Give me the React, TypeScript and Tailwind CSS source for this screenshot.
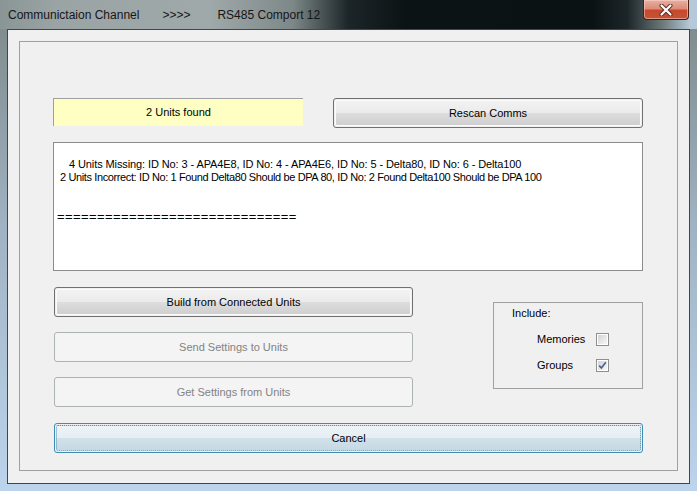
import React from "react";

const F = { fontFamily: '"Liberation Sans", Arial, sans-serif' };

function Btn({ label, cls = "" }: { label: string; cls?: string }) {
  return (
    <div
      className={`h-[30px] rounded-[3px] border border-[#707070] p-px ${cls}`}
    >
      <div className="h-full w-full rounded-[2px] border border-[#fbfbfb] bg-[linear-gradient(to_bottom,#f2f2f2_0%,#ebebeb_48%,#dddddd_52%,#cfcfcf_100%)] flex items-center justify-center text-[11px] text-black">
        {label}
      </div>
    </div>
  );
}

function DisabledBtn({ label }: { label: string }) {
  return (
    <div className="h-[30px] rounded-[3px] border border-[#adb2b5] bg-[#f4f4f4] flex items-center justify-center text-[11px] text-[#838383]">
      {label}
    </div>
  );
}

function Check({ checked }: { checked?: boolean }) {
  return (
    <div className="w-[13px] h-[13px] border border-[#8e8f8f] bg-white p-px">
      <div className="w-full h-full bg-[linear-gradient(135deg,#cfd1d4_0%,#e8e9ea_60%,#f6f6f6_100%)] flex items-center justify-center">
        {checked && (
          <svg width="9" height="9" viewBox="0 0 9 9">
            <path d="M1.2 4.6 L3.4 7 L7.8 1.2" stroke="#4a5f8f" strokeWidth="1.6" fill="none" />
          </svg>
        )}
      </div>
    </div>
  );
}

export default function App() {
  return (
    <div
      style={F}
      className="w-[697px] h-[491px] flex flex-col overflow-hidden bg-[linear-gradient(to_bottom,#7c8787_0%,#9fb2c2_45%,#bcd4ec_100%)]"
    >
      {/* Title bar */}
      <div className="h-[29px] shrink-0 flex items-start justify-between bg-[linear-gradient(to_right,#8a9595_0%,#9aa4a4_8%,#a0a9a9_30%,#7d8888_42%,#1c2528_50%,#0b1315_58%,#0a1214_85%,#1c2528_90%,#6c7878_95%,#b5c9da_99%)]">
        <div className="pl-[8px] pt-[8px] text-[12px] leading-[15px] text-[#161616] whitespace-pre">
          <span>Communictaion Channel</span>
          <span className="ml-[23px]">&gt;&gt;&gt;&gt;</span>
          <span className="ml-[27px]">RS485 Comport 12</span>
        </div>
        <div className="mr-[8px] w-[46px] h-[20px] rounded-b-[4px] border border-t-0 border-[#4b1e14] bg-[linear-gradient(to_bottom,#e7b0a2_0%,#dc8c78_45%,#c9482c_55%,#c0553a_100%)] flex items-center justify-center shadow-[inset_0_0_0_1px_rgba(255,220,210,0.5)]">
          <svg width="14" height="12" viewBox="0 0 14 12">
            <path d="M2.5 1.5 L11.5 10.5 M11.5 1.5 L2.5 10.5" stroke="#5a2a20" strokeWidth="4" strokeLinecap="round" />
            <path d="M2.5 1.5 L11.5 10.5 M11.5 1.5 L2.5 10.5" stroke="#ffffff" strokeWidth="2.2" strokeLinecap="round" />
          </svg>
        </div>
      </div>

      {/* Client */}
      <div className="flex-1 px-[7px] pb-[7px] flex">
        <div className="flex-1 border border-[#3a4852] bg-[#f0f0f0] pl-[11px] pr-[11px] pt-[11px] pb-[12px] flex">
          <div className="flex-1 border border-[#a0a0a0] pl-[33px] pr-[34px] pt-[56px] flex flex-col">
            {/* Row 1 */}
            <div className="flex justify-between items-start">
              <div className="w-[250px] h-[28px] border-t border-l border-[#a0a0a0] bg-[#ffffc4] flex items-center justify-center text-[11px] text-black">
                2 Units found
              </div>
              <Btn label="Rescan Comms" cls="w-[310px]" />
            </div>

            {/* Text box */}
            <div className="mt-[14px] h-[129px] border border-[#8c8c8c] bg-white pl-[3px] pt-[2px] text-[11px] leading-[13px] text-black whitespace-pre">
              <div>&nbsp;</div>
              <div className="ml-[12px] tracking-[-0.1px]">4 Units Missing: ID No: 3 - APA4E8, ID No: 4 - APA4E6, ID No: 5 - Delta80, ID No: 6 - Delta100</div>
              <div className="ml-[3px] tracking-[-0.38px]">2 Units Incorrect: ID No: 1 Found Delta80 Should be DPA 80, ID No: 2 Found Delta100 Should be DPA 100</div>
              <div>&nbsp;</div>
              <div>&nbsp;</div>
              <div className="text-[13px] tracking-[0.4px]">==============================</div>
            </div>

            {/* Middle */}
            <div className="mt-[16px] flex justify-between items-start">
              <div className="ml-px w-[359px] flex flex-col gap-[15px]">
                <Btn label="Build from Connected Units" />
                <DisabledBtn label="Send Settings to Units" />
                <DisabledBtn label="Get Settings from Units" />
              </div>
              <div className="mt-[15px] w-[150px] h-[87px] border border-[#a0a0a0] pl-[18px] pt-[4px] text-[11px] leading-[13px] text-black">
                <div>Include:</div>
                <div className="mt-[13px] ml-[25px] grid grid-cols-[59px_13px] gap-y-[13px] items-center">
                  <div>Memories</div>
                  <Check />
                  <div>Groups</div>
                  <Check checked />
                </div>
              </div>
            </div>

            {/* Cancel */}
            <div className="mt-[16px] ml-px h-[30px] rounded-[3px] border border-[#3c8cb4] p-px">
              <div className="h-full w-full rounded-[2px] border border-dotted border-[#5a8ea8] bg-[linear-gradient(to_bottom,#eef4f7_0%,#e4eef3_48%,#d0e1ea_52%,#c6d9e3_100%)] flex items-center justify-center text-[11px] text-black">
                Cancel
              </div>
            </div>
          </div>
        </div>
      </div>
    </div>
  );
}
